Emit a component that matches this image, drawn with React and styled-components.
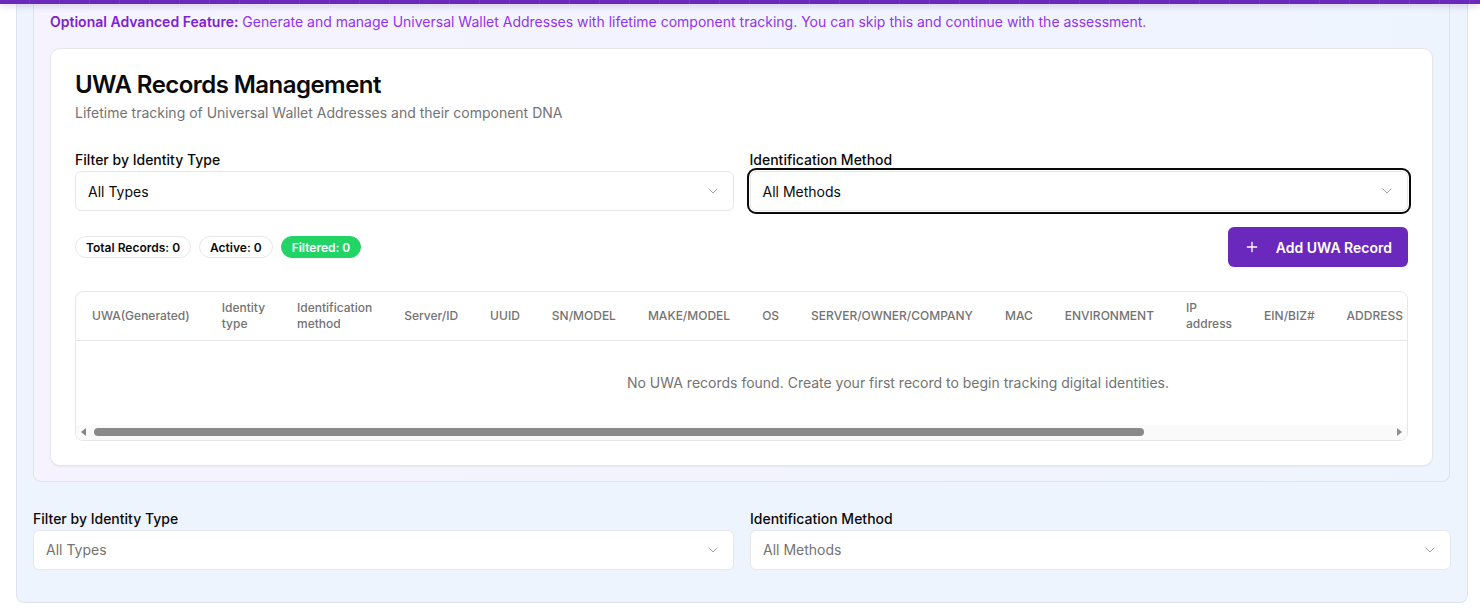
import React from 'react'
import styled, { createGlobalStyle } from 'styled-components'
import { ChevronDown, Plus } from 'lucide-react'

const GlobalStyle = createGlobalStyle`
	* { box-sizing: border-box; }
	body {
		margin: 0;
		background: #ffffff;
		font-family: Inter, "Noto Sans", "Liberation Sans", sans-serif;
		color: #0a0a0a;
		overflow: hidden;
	}
`

const TopBar = styled.div`
	height: 4px;
	background-color: #6b28bd;
	background-image: repeating-linear-gradient(
		90deg,
		transparent 0 29px,
		rgba(255, 255, 255, 0.08) 29px 30px
	);
	box-shadow: 0 2px 6px rgba(60, 20, 120, 0.22);
	position: relative;
	z-index: 2;
`

const Page = styled.div`
	padding: 0 12px 0 16px;
	height: 606px;
	overflow: hidden;
`

const Outer = styled.section`
	background: #eef4fe;
	border: 1px solid #dde3ee;
	border-top: none;
	border-radius: 0 0 8px 8px;
	padding: 0 16px 32px 16px;
	display: flex;
	flex-direction: column;
	gap: 24px;
`

const FeaturePanel = styled.div`
	background: linear-gradient(90deg, #f6f3fe 0%, #eef4fe 100%);
	border: 1px solid #e2e1f0;
	border-top: none;
	border-radius: 0 0 8px 8px;
	padding: 8px 16px 15px 16px;
	margin-right: 1px;
`

const Notice = styled.p`
	margin: 0 0 16px 0;
	font-size: 14px;
	line-height: 20px;
	color: #9333ea;

	strong {
		color: #7e22ce;
		font-weight: 600;
	}
`

const Card = styled.div`
	background: #ffffff;
	border: 1px solid #e5e7eb;
	border-radius: 10px;
	box-shadow: 0 1px 2px rgba(0, 0, 0, 0.05);
`

const CardHeader = styled.div`
	padding: 24px 24px 24px;
	display: flex;
	flex-direction: column;
	gap: 6px;
`

const CardTitle = styled.h2`
	margin: 0;
	font-size: 24px;
	line-height: 24px;
	font-weight: 600;
	letter-spacing: -0.55px;
	color: #0a0a0a;
`

const CardDescription = styled.p`
	margin: 0;
	font-size: 14px;
	line-height: 20px;
	color: #737373;
`

const CardContent = styled.div`
	padding: 0 24px 24px;
	display: flex;
	flex-direction: column;
	gap: 16px;
`

const FilterGrid = styled.div`
	display: grid;
	grid-template-columns: 1fr 1fr;
	gap: 16px;
	padding-top: 6px;
`

const Field = styled.div`
	display: flex;
	flex-direction: column;
	gap: 4px;
`

const Label = styled.label`
	font-size: 14px;
	line-height: 14px;
	font-weight: 500;
	color: #0a0a0a;
`

const SelectBox = styled.div`
	height: 40px;
	display: flex;
	align-items: center;
	justify-content: space-between;
	padding: 0 12px;
	background: #ffffff;
	border: 1px solid #e5e7eb;
	border-radius: 6px;
	font-size: 14px;
	color: ${p => (p.$placeholder ? '#737373' : '#0a0a0a')};
	outline: ${p => (p.$focused ? '2px solid #0a0a0a' : 'none')};
	outline-offset: 1px;

	svg {
		color: #a3a3a3;
	}
`

const ActionRow = styled.div`
	display: flex;
	align-items: center;
	justify-content: space-between;
`

const Badges = styled.div`
	display: flex;
	gap: 8px;
`

const Badge = styled.span`
	display: inline-flex;
	align-items: center;
	height: 22px;
	padding: 0 10px;
	border-radius: 999px;
	font-size: 12px;
	font-weight: 600;
	border: 1px solid ${p => (p.$green ? '#22d466' : '#e5e7eb')};
	background: ${p => (p.$green ? '#22d466' : '#ffffff')};
	color: ${p => (p.$green ? '#ffffff' : '#0a0a0a')};
`

const AddButton = styled.button`
	height: 40px;
	display: inline-flex;
	align-items: center;
	gap: 16px;
	border: none;
	border-radius: 6px;
	background: #6b28bd;
	color: #ffffff;
	font-family: inherit;
	font-size: 14px;
	font-weight: 600;
	white-space: nowrap;
	padding: 0 16px;
`

const TableWrap = styled.div`
	margin-top: 8px;
	border: 1px solid #e5e7eb;
	border-radius: 8px;
	overflow: hidden;
`

const TableViewport = styled.div`
	overflow: hidden;
`

const Table = styled.table`
	border-collapse: collapse;
	width: max-content;
	font-size: 14px;
`

const Th = styled.th`
	height: 48px;
	padding: 0 16px;
	text-align: left;
	font-size: 12px;
	line-height: 16px;
	font-weight: 500;
	color: #737373;
	white-space: nowrap;
	border-bottom: 1px solid #e5e7eb;
`

const SpacerTh = styled(Th)`
	width: ${p => p.$width}px;
	padding: 0;
`

const HeadLabel = styled.span`
	display: block;
	white-space: ${p => (p.$wrap ? 'normal' : 'nowrap')};
	width: ${p => (p.$wrap ? 'min-content' : 'auto')};
`

const EmptyCell = styled.td`
	padding: 32px 16px;
	text-align: center;
	color: #737373;
	font-size: 14px;
	line-height: 20px;
`

const ScrollBar = styled.div`
	height: 15px;
	display: flex;
	align-items: center;
	background: #fafafa;
`

const ScrollArrow = styled.span`
	width: 15px;
	height: 15px;
	flex: none;
	display: flex;
	align-items: center;
	justify-content: center;

	&::before {
		content: '';
		width: 0;
		height: 0;
		border-top: 4px solid transparent;
		border-bottom: 4px solid transparent;
		${p =>
			p.$dir === 'left'
				? 'border-right: 5px solid #858585;'
				: 'border-left: 5px solid #8e8e8e;'}
	}
`

const ScrollTrack = styled.div`
	flex: 1;
	height: 100%;
	display: flex;
	align-items: center;
	padding: 0 2px 0 3px;
`

const ScrollThumb = styled.div`
	height: 8px;
	border-radius: 4px;
	background: #8a8a8a;
`

const columns = [
	['UWA(Generated)'],
	['Identity type', true],
	['Identification method', true],
	['Server/ID'],
	['UUID'],
	['SN/MODEL'],
	['MAKE/MODEL'],
	['OS'],
	['SERVER/OWNER/COMPANY'],
	['MAC'],
	['ENVIRONMENT'],
	['IP address', true],
	['EIN/BIZ#'],
	['ADDRESS'],
]

const hiddenWidth = 301
const visibleRatio = 0.81

const Select = ({ value, placeholder, focused }) => (
	<SelectBox $placeholder={placeholder} $focused={focused}>
		<span>{value}</span>
		<ChevronDown size={16} strokeWidth={1.5} />
	</SelectBox>
)

const Filters = ({ placeholder, focused }) => (
	<FilterGrid>
		<Field>
			<Label>Filter by Identity Type</Label>
			<Select value="All Types" placeholder={placeholder} />
		</Field>
		<Field>
			<Label>Identification Method</Label>
			<Select value="All Methods" placeholder={placeholder} focused={focused} />
		</Field>
	</FilterGrid>
)

const App = () => (
	<>
		<GlobalStyle />
		<TopBar />
		<Page>
			<Outer>
				<FeaturePanel>
					<Notice>
						<strong>Optional Advanced Feature:</strong> Generate and manage
						Universal Wallet Addresses with lifetime component tracking. You can
						skip this and continue with the assessment.
					</Notice>
					<Card>
						<CardHeader>
							<CardTitle>UWA Records Management</CardTitle>
							<CardDescription>
								Lifetime tracking of Universal Wallet Addresses and their
								component DNA
							</CardDescription>
						</CardHeader>
						<CardContent>
							<Filters focused />
							<ActionRow>
								<Badges>
									<Badge>Total Records: 0</Badge>
									<Badge>Active: 0</Badge>
									<Badge $green>Filtered: 0</Badge>
								</Badges>
								<AddButton type="button">
									<Plus size={16} strokeWidth={2} />
									Add UWA Record
								</AddButton>
							</ActionRow>
							<TableWrap>
								<TableViewport>
									<Table>
										<thead>
											<tr>
												{columns.map(([name, wrap]) => (
													<Th key={name}>
														<HeadLabel $wrap={wrap}>{name}</HeadLabel>
													</Th>
												))}
												<SpacerTh $width={hiddenWidth} />
											</tr>
										</thead>
										<tbody>
											<tr>
												<EmptyCell colSpan={columns.length + 1}>
													No UWA records found. Create your first record to
													begin tracking digital identities.
												</EmptyCell>
											</tr>
										</tbody>
									</Table>
								</TableViewport>
								<ScrollBar>
									<ScrollArrow $dir="left" />
									<ScrollTrack>
										<ScrollThumb style={{ width: `${visibleRatio * 100}%` }} />
									</ScrollTrack>
									<ScrollArrow $dir="right" />
								</ScrollBar>
							</TableWrap>
						</CardContent>
					</Card>
				</FeaturePanel>
				<Filters placeholder />
			</Outer>
		</Page>
	</>
)

export default App
